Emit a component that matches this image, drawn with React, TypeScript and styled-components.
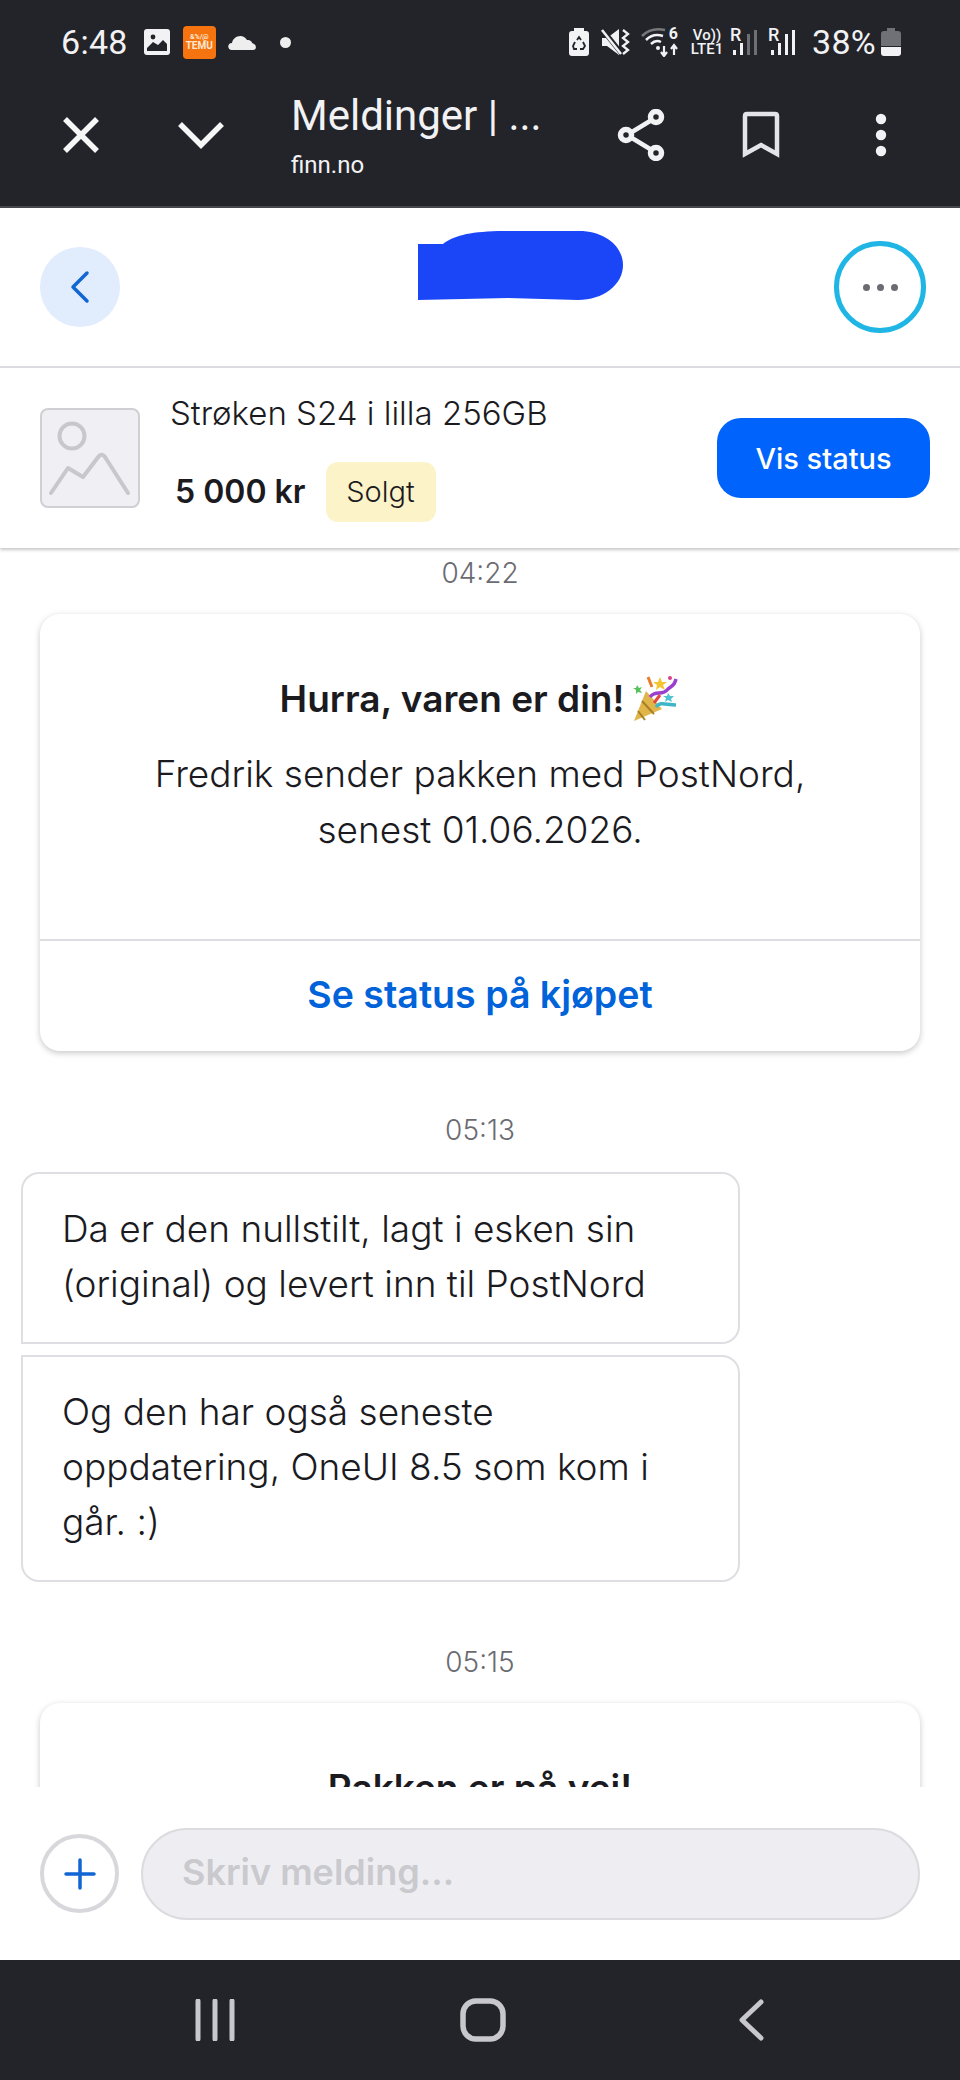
import React from 'react'
import styled, { createGlobalStyle } from 'styled-components'

const GlobalStyle = createGlobalStyle`
  html, body {
    margin: 0;
    padding: 0;
    background: #ffffff;
  }
  * {
    box-sizing: border-box;
  }
`

const Page = styled.div`
  display: flex;
  flex-direction: column;
  width: 960px;
  height: 2080px;
  overflow: hidden;
  background: #ffffff;
  color: #1b1b1f;
  font-family: Inter, 'Liberation Sans', sans-serif;
`

const TopChrome = styled.div`
  flex: none;
  height: 208px;
  border-bottom: 2px solid #46474c;
  background: #22242a;
  color: #f2f2f4;
  font-family: Roboto, 'Liberation Sans', sans-serif;
`
const StatusBar = styled.div`
  display: flex;
  justify-content: space-between;
  align-items: center;
  height: 84px;
  padding: 0 59px 0 61px;
`
const StatusGroup = styled.div`
  display: flex;
  align-items: center;
`
const StatusSlot = styled.span<{ $after?: number }>`
  display: flex;
  align-items: center;
  margin-right: ${(p) => p.$after ?? 0}px;
`
const StatusText = styled.span`
  font-size: 34px;
  line-height: 40px;
  letter-spacing: 0.3px;
`
const TemuBadge = styled.span`
  display: flex;
  flex-direction: column;
  justify-content: center;
  align-items: center;
  width: 33px;
  height: 33px;
  border-radius: 4px;
  background: #f5740f;
  color: #ffe9d4;
  font-weight: 700;
`
const TemuMark = styled.span`
  font-size: 7px;
  line-height: 8px;
`
const TemuName = styled.span`
  font-size: 10px;
  line-height: 10px;
`
const Dot = styled.span`
  width: 11px;
  height: 11px;
  border-radius: 50%;
  background: #eeeeee;
`
const WifiWrap = styled.span`
  position: relative;
  display: block;
  width: 38px;
  height: 30px;
`
const WifiBand = styled.span`
  position: absolute;
  top: 0;
  right: 1px;
  font-size: 16px;
  font-weight: 700;
  line-height: 14px;
`
const VoLte = styled.span`
  display: flex;
  flex-direction: column;
  align-items: center;
  width: 34px;
  font-size: 15px;
  font-weight: 500;
  line-height: 14px;
`
const Signal = styled.span`
  position: relative;
  display: block;
  width: 27px;
  height: 28px;
`
const SignalLetter = styled.span`
  position: absolute;
  top: -2px;
  left: 0;
  font-size: 18px;
  font-weight: 500;
  line-height: 18px;
`

const Toolbar = styled.div`
  display: flex;
  align-items: center;
  height: 122px;
  padding: 0 19px 20px 21px;
`
const ToolButton = styled.div`
  display: flex;
  flex: none;
  justify-content: center;
  align-items: center;
  width: 120px;
`
const TitleBlock = styled.div`
  flex: 1;
  margin-left: 30px;
`
const PageTitle = styled.div`
  font-size: 42px;
  line-height: 50px;
`
const PageHost = styled.div`
  margin-top: 10px;
  font-size: 24px;
  line-height: 28px;
`

const Header = styled.div`
  display: flex;
  flex: none;
  justify-content: space-between;
  align-items: center;
  height: 160px;
  border-bottom: 2px solid #dedee2;
  padding: 0 34px 0 40px;
`
const BackButton = styled.div`
  display: flex;
  justify-content: center;
  align-items: center;
  width: 80px;
  height: 80px;
  border-radius: 50%;
  background: #e1ecfd;
`
const Redaction = styled.svg`
  margin: -44px 0 0 86px;
`
const OptionsButton = styled.div`
  display: flex;
  justify-content: center;
  align-items: center;
  gap: 7px;
  width: 92px;
  height: 92px;
  border: 5px solid #1fb6e6;
  border-radius: 50%;
`
const OptionDot = styled.span`
  width: 7px;
  height: 7px;
  border-radius: 50%;
  background: #6b6b72;
`

const ProductBar = styled.div`
  position: relative;
  z-index: 1;
  display: flex;
  flex: none;
  align-items: center;
  height: 180px;
  padding: 0 30px 0 40px;
  background: #ffffff;
  box-shadow: 0 2px 3px rgba(0, 0, 0, 0.22);
`
const Thumb = styled.div`
  display: flex;
  flex: none;
  justify-content: center;
  align-items: center;
  width: 100px;
  height: 100px;
  border: 2px solid #cfcfd4;
  border-radius: 8px;
  background: #f0f0f4;
`
const ProductInfo = styled.div`
  flex: 1;
  margin-left: 30px;
  padding-bottom: 2px;
`
const ProductTitle = styled.div`
  font-size: 33px;
  font-weight: 300;
  line-height: 40px;
`
const PriceRow = styled.div`
  display: flex;
  align-items: center;
  gap: 20px;
  margin: 29px 0 0 5px;
`
const Price = styled.span`
  font-size: 32px;
  font-weight: 600;
  line-height: 40px;
`
const Tag = styled.span`
  display: flex;
  justify-content: center;
  align-items: center;
  width: 110px;
  height: 60px;
  border-radius: 12px;
  background: #fdf3c9;
  font-size: 29px;
  font-weight: 300;
`
const StatusButton = styled.div`
  display: flex;
  flex: none;
  justify-content: center;
  align-items: center;
  width: 213px;
  height: 80px;
  border-radius: 24px;
  background: #0063fb;
  color: #ffffff;
  font-size: 29px;
  font-weight: 500;
`

const Messages = styled.div`
  flex: 1;
  min-height: 0;
  overflow: hidden;
  padding-top: 8px;
`
const TimeStamp = styled.div<{ $top: number }>`
  height: 34px;
  margin-top: ${(p) => p.$top}px;
  color: #6b6b72;
  font-size: 28px;
  font-weight: 300;
  line-height: 34px;
  text-align: center;
`
const Card = styled.div`
  width: 880px;
  margin: 24px 0 0 40px;
  border-radius: 20px;
  background: #ffffff;
  box-shadow: 0 2px 6px rgba(0, 0, 0, 0.22);
  text-align: center;
`
const CardBody = styled.div`
  padding: 60px 40px 81px;
`
const CardTitle = styled.div`
  display: flex;
  justify-content: center;
  align-items: center;
  gap: 8px;
  font-size: 37px;
  font-weight: 600;
  line-height: 50px;
`
const CardText = styled.div`
  margin-top: 22px;
  font-size: 37px;
  font-weight: 300;
  line-height: 56px;
`
const CardLink = styled.div`
  display: flex;
  justify-content: center;
  align-items: center;
  height: 112px;
  border-top: 2px solid #dedee2;
  padding-bottom: 4px;
  color: #0063d9;
  font-size: 37.5px;
  font-weight: 600;
`
const Bubble = styled.div<{ $first?: boolean }>`
  width: 719px;
  margin: ${(p) => (p.$first ? '25px' : '11px')} 0 0 21px;
  border: 2px solid #dfdfe3;
  border-radius: ${(p) => (p.$first ? '18px 18px 18px 0' : '0 18px 18px 18px')};
  padding: 27px 39px 31px;
  font-size: 37px;
  font-weight: 300;
  line-height: 55px;
`

const Composer = styled.div`
  display: flex;
  flex: none;
  align-items: center;
  gap: 22px;
  height: 173px;
  padding: 0 40px;
  background: #ffffff;
`
const AddButton = styled.div`
  display: flex;
  flex: none;
  justify-content: center;
  align-items: center;
  width: 79px;
  height: 79px;
  border: 4px solid #d8d8dc;
  border-radius: 50%;
`
const MessageInput = styled.div`
  display: flex;
  flex: 1;
  align-items: center;
  height: 92px;
  border: 2px solid #dcdce0;
  border-radius: 46px;
  padding: 0 0 4px 39px;
  background: #eeeef2;
  color: #c9c9ce;
  font-size: 36px;
  font-weight: 600;
`

const NavBar = styled.div`
  display: grid;
  flex: none;
  grid-template-columns: repeat(3, 268px);
  justify-content: center;
  justify-items: center;
  align-items: center;
  height: 120px;
  padding-left: 6px;
  background: #22242a;
`

const CloseIcon = () => (
  <svg width="40" height="40" viewBox="0 0 40 40">
    <path d="M4 4 L36 36 M36 4 L4 36" stroke="#f6f6f6" strokeWidth="5.5" fill="none" />
  </svg>
)

const ChevronDownIcon = () => (
  <svg width="48" height="30" viewBox="0 0 48 30">
    <path d="M3 4 L24 25 L45 4" stroke="#f6f6f6" strokeWidth="5.5" fill="none" />
  </svg>
)

const ShareIcon = () => (
  <svg width="48" height="52" viewBox="0 0 48 52">
    <path d="M10 26 L38 9 M10 26 L38 43" stroke="#f2f2f4" strokeWidth="4.5" fill="none" />
    <circle cx="9" cy="26" r="5.5" fill="#22242a" stroke="#f2f2f4" strokeWidth="5.5" />
    <circle cx="39" cy="8" r="5.5" fill="#22242a" stroke="#f2f2f4" strokeWidth="5.5" />
    <circle cx="39" cy="44" r="5.5" fill="#22242a" stroke="#f2f2f4" strokeWidth="5.5" />
  </svg>
)

const BookmarkIcon = () => (
  <svg width="38" height="48" viewBox="0 0 38 48">
    <path
      d="M3 5 Q3 3 5 3 H33 Q35 3 35 5 V43 L19 34 L3 43 Z"
      stroke="#e4e4e8"
      strokeWidth="4.5"
      fill="none"
    />
  </svg>
)

const MoreIcon = () => (
  <svg width="12" height="44" viewBox="0 0 12 44">
    <circle cx="6" cy="6" r="5.2" fill="#f2f2f4" />
    <circle cx="6" cy="22" r="5.2" fill="#f2f2f4" />
    <circle cx="6" cy="38" r="5.2" fill="#f2f2f4" />
  </svg>
)

const ImageNoteIcon = () => (
  <svg width="26" height="26" viewBox="0 0 26 26">
    <rect width="26" height="26" rx="3" fill="#f2f2f4" />
    <circle cx="9" cy="8" r="2.4" fill="#22242a" />
    <path d="M3 22 V19 L9 13 L14 16 L19 11 L23 15 V22 Z" fill="#22242a" />
  </svg>
)

const CloudIcon = () => (
  <svg width="30" height="18" viewBox="0 0 30 18">
    <path
      d="M5 17 C0 17 0 10 5 10 C6 3 16 0 20 7 C24 7 25 9 25 10 C30 11 30 17 26 17 Z"
      fill="#eeeeee"
    />
  </svg>
)

const BatterySaverIcon = () => (
  <svg width="20" height="28" viewBox="0 0 20 28">
    <path d="M5 0 H15 V3 H17 Q20 3 20 6 V25 Q20 28 17 28 H3 Q0 28 0 25 V6 Q0 3 3 3 H5 Z" fill="#f2f2f4" />
    <path d="M8 12 L10 9 L12 12 M14 14 L16 18 L14 21 H11 M8 21 H5 L4 18 L6 14" stroke="#22242a" strokeWidth="1.8" fill="none" />
  </svg>
)

const MuteIcon = () => (
  <svg width="29" height="28" viewBox="0 0 29 28">
    <path d="M1 10 H6 L18 1 V27 L6 18 H1 Z" fill="#f2f2f4" />
    <path d="M1 1 L21 26" stroke="#22242a" strokeWidth="5" />
    <path d="M1 2 L20 26" stroke="#f2f2f4" strokeWidth="2.5" />
    <path d="M22 2 L27 6 L22 10 L27 14 L22 18 L27 22 L22 26" stroke="#f2f2f4" strokeWidth="2.3" fill="none" />
  </svg>
)

const WifiIcon = () => (
  <svg width="38" height="30" viewBox="0 0 38 30">
    <path d="M1 9 C7 3 15 1 24 3" stroke="#77787c" strokeWidth="2.5" fill="none" />
    <path d="M5 13 C10 8 16 7 22 9" stroke="#f2f2f4" strokeWidth="2.5" fill="none" />
    <path d="M10 17 C13 14 16 13 20 15" stroke="#f2f2f4" strokeWidth="2.5" fill="none" />
    <circle cx="17" cy="21" r="2" fill="#f2f2f4" />
    <path d="M23 19 V28 M20 25 L23 29 L26 25 M33 28 V19 M30 22 L33 18 L36 22" stroke="#f2f2f4" strokeWidth="2.2" fill="none" />
  </svg>
)

const signalBars = [
  { x: 3, h: 5 },
  { x: 10, h: 12 },
  { x: 17, h: 21 },
  { x: 24, h: 25 },
]

const SignalBars = ({ active }: { active: number }) => (
  <svg width="27" height="28" viewBox="0 0 27 28">
    {signalBars.map((bar, i) => (
      <rect
        key={bar.x}
        x={bar.x}
        y={27 - bar.h}
        width="3"
        height={bar.h}
        fill={i < active ? '#f2f2f4' : '#6e6f74'}
      />
    ))}
  </svg>
)

const BatteryIcon = () => (
  <svg width="20" height="28" viewBox="0 0 20 28">
    <path d="M6 0 H14 V3 H17 Q20 3 20 6 V18 H0 V6 Q0 3 3 3 H6 Z" fill="#707176" />
    <path d="M0 19 H20 V25 Q20 28 17 28 H3 Q0 28 0 25 Z" fill="#f2f2f4" />
  </svg>
)

const ChevronLeftIcon = () => (
  <svg width="20" height="34" viewBox="0 0 20 34">
    <path d="M17 3 L3 17 L17 31" stroke="#1266d4" strokeWidth="3.5" fill="none" strokeLinecap="round" strokeLinejoin="round" />
  </svg>
)

const PlaceholderIcon = () => (
  <svg width="96" height="96" viewBox="0 0 96 96">
    <circle cx="30" cy="26" r="12.5" fill="none" stroke="#c7c7cc" strokeWidth="4" />
    <path d="M9 83 L26 58 L41 67 L57 46 Q60 43 63 47 L86 83" fill="none" stroke="#c7c7cc" strokeWidth="4" strokeLinecap="round" strokeLinejoin="round" />
  </svg>
)

const PartyIcon = () => (
  <svg width="48" height="48" viewBox="0 0 48 48">
    <path d="M2 46 L14 16 L30 34 Z" fill="#e0b54a" />
    <path d="M6 36 L13 45 M10 26 L22 39" stroke="#a87f24" strokeWidth="2" />
    <path d="M18 22 C24 14 30 22 36 14 C40 10 42 12 44 4" stroke="#9a3fd0" strokeWidth="3.5" fill="none" />
    <path d="M24 32 C28 26 34 30 44 30" stroke="#3fb6c8" strokeWidth="3.5" fill="none" />
    <path d="M22 28 L28 20" stroke="#e2483d" strokeWidth="3" />
    <path d="M28 2 L30 7 L35 7 L31 10 L33 15 L28 12 L24 15 L25 10 L21 7 L26 7 Z" fill="#f5c431" />
    <path d="M16 2 L20 12" stroke="#e87d2b" strokeWidth="3" />
    <circle cx="38" cy="3" r="2" fill="#d6418f" />
    <path d="M5 10 L7 13 L10 12 L8 15 L10 18 L6 17 L4 19 L4 15 L1 13 L4 13 Z" fill="#55c25c" />
    <path d="M36 18 L38 21 L42 21 L39 24 L40 27 L36 25 L33 27 L34 23 L31 21 L35 21 Z" fill="#4dc4cf" />
  </svg>
)

const PlusIcon = () => (
  <svg width="34" height="34" viewBox="0 0 34 34">
    <path d="M17 3 V31 M3 17 H31" stroke="#1266d4" strokeWidth="3.5" strokeLinecap="round" />
  </svg>
)

const RecentsIcon = () => (
  <svg width="40" height="42" viewBox="0 0 40 42">
    <path d="M3 2 V40 M20 2 V40 M37 2 V40" stroke="#c8c8cc" strokeWidth="5" strokeLinecap="round" />
  </svg>
)

const HomeIcon = () => (
  <svg width="46" height="44" viewBox="0 0 46 44">
    <rect x="3" y="3" width="40" height="38" rx="13" fill="none" stroke="#c8c8cc" strokeWidth="5.5" />
  </svg>
)

const BackIcon = () => (
  <svg width="26" height="42" viewBox="0 0 26 42">
    <path d="M23 3 L4 21 L23 39" stroke="#c8c8cc" strokeWidth="5" fill="none" strokeLinecap="round" strokeLinejoin="round" />
  </svg>
)

const App = () => (
  <Page>
    <GlobalStyle />
    <TopChrome>
      <StatusBar>
        <StatusGroup>
          <StatusSlot $after={16}>
            <StatusText>6:48</StatusText>
          </StatusSlot>
          <StatusSlot $after={13}>
            <ImageNoteIcon />
          </StatusSlot>
          <StatusSlot $after={11}>
            <TemuBadge>
              <TemuMark>&amp;%/@</TemuMark>
              <TemuName>TEMU</TemuName>
            </TemuBadge>
          </StatusSlot>
          <StatusSlot $after={23}>
            <CloudIcon />
          </StatusSlot>
          <Dot />
        </StatusGroup>
        <StatusGroup>
          <StatusSlot $after={12}>
            <BatterySaverIcon />
          </StatusSlot>
          <StatusSlot $after={11}>
            <MuteIcon />
          </StatusSlot>
          <StatusSlot $after={11}>
            <WifiWrap>
              <WifiIcon />
              <WifiBand>6</WifiBand>
            </WifiWrap>
          </StatusSlot>
          <StatusSlot $after={6}>
            <VoLte>
              <span>Vo))</span>
              <span>LTE1</span>
            </VoLte>
          </StatusSlot>
          <StatusSlot $after={11}>
            <Signal>
              <SignalBars active={2} />
              <SignalLetter>R</SignalLetter>
            </Signal>
          </StatusSlot>
          <StatusSlot $after={17}>
            <Signal>
              <SignalBars active={4} />
              <SignalLetter>R</SignalLetter>
            </Signal>
          </StatusSlot>
          <StatusSlot $after={5}>
            <StatusText>38%</StatusText>
          </StatusSlot>
          <BatteryIcon />
        </StatusGroup>
      </StatusBar>
      <Toolbar>
        <ToolButton>
          <CloseIcon />
        </ToolButton>
        <ToolButton>
          <ChevronDownIcon />
        </ToolButton>
        <TitleBlock>
          <PageTitle>Meldinger | ...</PageTitle>
          <PageHost>finn.no</PageHost>
        </TitleBlock>
        <ToolButton>
          <ShareIcon />
        </ToolButton>
        <ToolButton>
          <BookmarkIcon />
        </ToolButton>
        <ToolButton>
          <MoreIcon />
        </ToolButton>
      </Toolbar>
    </TopChrome>

    <Header>
      <BackButton>
        <ChevronLeftIcon />
      </BackButton>
      <Redaction width="205" height="70" viewBox="0 0 205 70">
        <path
          d="M0 14 L25 14 C35 6 50 2 80 1 L165 1 C190 3 205 18 205 35 C205 55 185 70 160 70 L90 68 L0 70 Z"
          fill="#1b46f8"
        />
      </Redaction>
      <OptionsButton>
        <OptionDot />
        <OptionDot />
        <OptionDot />
      </OptionsButton>
    </Header>

    <ProductBar>
      <Thumb>
        <PlaceholderIcon />
      </Thumb>
      <ProductInfo>
        <ProductTitle>Strøken S24 i lilla 256GB</ProductTitle>
        <PriceRow>
          <Price>5 000 kr</Price>
          <Tag>Solgt</Tag>
        </PriceRow>
      </ProductInfo>
      <StatusButton>Vis status</StatusButton>
    </ProductBar>

    <Messages>
      <TimeStamp $top={0}>04:22</TimeStamp>
      <Card>
        <CardBody>
          <CardTitle>
            Hurra, varen er din! <PartyIcon />
          </CardTitle>
          <CardText>
            Fredrik sender pakken med PostNord,
            <br />
            senest 01.06.2026.
          </CardText>
        </CardBody>
        <CardLink>Se status på kjøpet</CardLink>
      </Card>

      <TimeStamp $top={62}>05:13</TimeStamp>
      <Bubble $first>
        Da er den nullstilt, lagt i esken sin
        <br />
        (original) og levert inn til PostNord
      </Bubble>
      <Bubble>
        Og den har også seneste
        <br />
        oppdatering, OneUI 8.5 som kom i
        <br />
        går. :)
      </Bubble>

      <TimeStamp $top={63}>05:15</TimeStamp>
      <Card>
        <CardBody>
          <CardTitle>Pakken er på vei!</CardTitle>
        </CardBody>
      </Card>
    </Messages>

    <Composer>
      <AddButton>
        <PlusIcon />
      </AddButton>
      <MessageInput>Skriv melding...</MessageInput>
    </Composer>

    <NavBar>
      <RecentsIcon />
      <HomeIcon />
      <BackIcon />
    </NavBar>
  </Page>
)

export default App
